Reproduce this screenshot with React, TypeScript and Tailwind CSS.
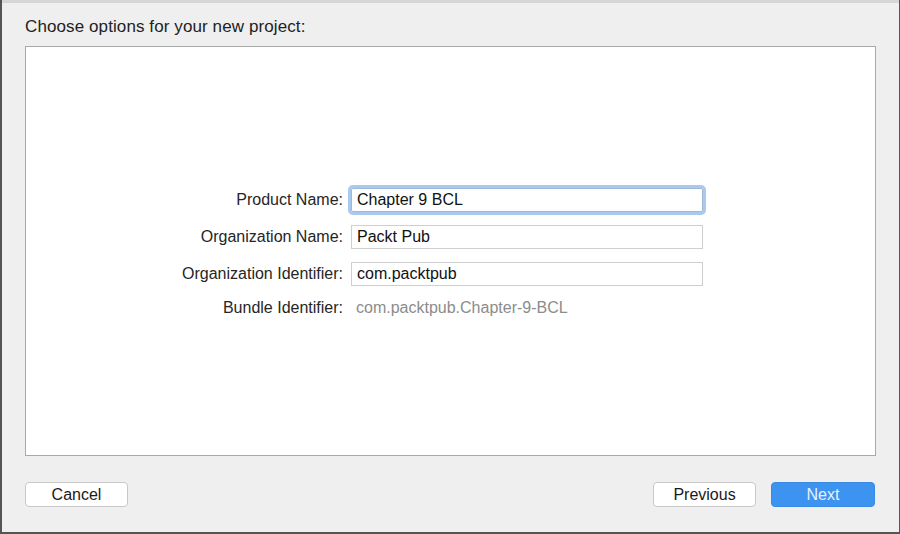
const FIELDS = [
  { label: "Product Name:", value: "Chapter 9 BCL", focused: true },
  { label: "Organization Name:", value: "Packt Pub", focused: false },
  { label: "Organization Identifier:", value: "com.packtpub", focused: false },
];

const App = () => {
  return (
    <div
      className="w-[900px] h-[534px] flex flex-col bg-[#efeff0] border-l-2 border-b-2 border-r border-[#555555] overflow-hidden"
      style={{ fontFamily: '"Liberation Sans", Arial, sans-serif' }}
    >
      {/* top strip */}
      <div className="h-[3px] bg-[#d6d6d6] shrink-0" />

      {/* title */}
      <div className="pl-[23px] pt-[14px] h-[43px] text-[17px] text-[#222222] leading-[20px] tracking-[0.1px]">
        Choose options for your new project:
      </div>

      {/* panel */}
      <div className="ml-[23px] w-[851px] h-[410px] bg-white border border-[#a9a9a9] flex items-center">
        <div className="mt-[2px] grid grid-cols-[317px_352px] grid-rows-[24px_24px_24px_18px] gap-x-[8px] gap-y-[13px] text-[16px]">
          {FIELDS.map((f) => (
            <div key={f.label} className="contents">
              <div className="flex items-center justify-end text-[#262626]">{f.label}</div>
              <div
                className={
                  f.focused
                    ? "flex items-center pl-[5px] border border-[#9fb8d8] rounded-[2px] ring-[3px] ring-[#a9c9ef] text-[#111111]"
                    : "flex items-center pl-[5px] border border-[#cfcfcf] text-[#111111]"
                }
              >
                {f.value}
              </div>
            </div>
          ))}
          <div className="flex items-center justify-end text-[#262626]">Bundle Identifier:</div>
          <div className="flex items-center pl-[5px] text-[#8c8c8c]">com.packtpub.Chapter-9-BCL</div>
        </div>
      </div>

      {/* buttons */}
      <div className="flex items-center pl-[23px] pr-[24px] mt-[26px] text-[16px]">
        <button className="w-[103px] h-[25px] rounded-[4px] bg-white border border-[#c8c8c8] text-[#1a1a1a]">
          Cancel
        </button>
        <div className="flex-1" />
        <button className="w-[103px] h-[25px] rounded-[4px] bg-white border border-[#c8c8c8] text-[#1a1a1a]">
          Previous
        </button>
        <button className="ml-[15px] w-[104px] h-[25px] rounded-[4px] bg-[#3d94f0] border border-[#3a8ae4] text-[#e9f1fc]">
          Next
        </button>
      </div>
    </div>
  );
};

export default App;
